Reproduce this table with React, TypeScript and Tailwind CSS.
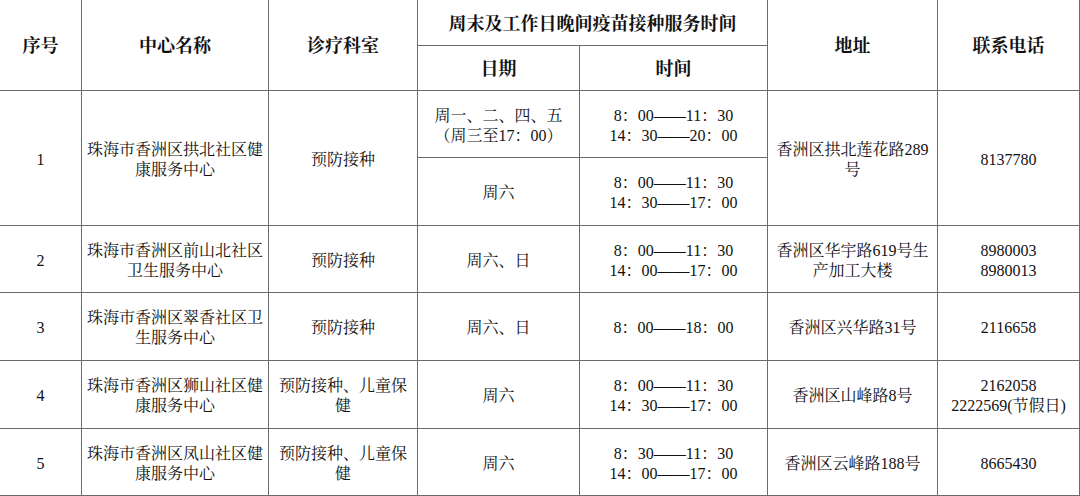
import React from "react";

const font = {
  fontFamily:
    '"Liberation Serif", "Noto Serif CJK SC", "Noto Sans CJK SC", serif',
};

const base = "border border-[#6b6b6b] px-[5px] text-center align-middle leading-[20px]";
const cell = `${base} pt-[3px]`;
const head = `${base} pt-[2px] text-[18px] font-bold`;

function Lines({ lines }: { lines: string[] }) {
  return (
    <>
      {lines.map((l, i) => (
        <div key={i}>{l}</div>
      ))}
    </>
  );
}

type Row = {
  no: string;
  name: string;
  dept: string;
  day: string[];
  time: string[];
  addr: string;
  phone: string[];
  h: string;
};

const rows: Row[] = [
  {
    no: "2",
    name: "珠海市香洲区前山北社区卫生服务中心",
    dept: "预防接种",
    day: ["周六、日"],
    time: ["8：00——11：30", "14：00——17：00"],
    addr: "香洲区华宇路619号生产加工大楼",
    phone: ["8980003", "8980013"],
    h: "h-[67px]",
  },
  {
    no: "3",
    name: "珠海市香洲区翠香社区卫生服务中心",
    dept: "预防接种",
    day: ["周六、日"],
    time: ["8：00——18：00"],
    addr: "香洲区兴华路31号",
    phone: ["2116658"],
    h: "h-[68px]",
  },
  {
    no: "4",
    name: "珠海市香洲区狮山社区健康服务中心",
    dept: "预防接种、儿童保健",
    day: ["周六"],
    time: ["8：00——11：30", "14：30——17：00"],
    addr: "香洲区山峰路8号",
    phone: ["2162058", "2222569(节假日)"],
    h: "h-[68px]",
  },
  {
    no: "5",
    name: "珠海市香洲区凤山社区健康服务中心",
    dept: "预防接种、儿童保健",
    day: ["周六"],
    time: ["8：30——11：30", "14：00——17：00"],
    addr: "香洲区云峰路188号",
    phone: ["8665430"],
    h: "h-[67px]",
  },
];

export default function App() {
  return (
    <div className="h-[496px] w-[1080px] overflow-hidden bg-white text-[16px] text-[#111]" style={font}>
      <table className="-ml-px -mt-px w-[1080px] table-fixed border-collapse">
        <colgroup>
          <col className="w-[82px]" />
          <col className="w-[187px]" />
          <col className="w-[149px]" />
          <col className="w-[162px]" />
          <col className="w-[188px]" />
          <col className="w-[170px]" />
          <col className="w-[142px]" />
        </colgroup>
        <tbody>
          <tr className="h-[46px]">
            <td rowSpan={2} className={head}>序号</td>
            <td rowSpan={2} className={head}>中心名称</td>
            <td rowSpan={2} className={head}>诊疗科室</td>
            <td colSpan={2} className={head}>周末及工作日晚间疫苗接种服务时间</td>
            <td rowSpan={2} className={head}>地址</td>
            <td rowSpan={2} className={head}>联系电话</td>
          </tr>
          <tr className="h-[45px]">
            <td className={head}>日期</td>
            <td className={head}>时间</td>
          </tr>
          <tr className="h-[67px]">
            <td rowSpan={2} className={cell}>1</td>
            <td rowSpan={2} className={cell}>珠海市香洲区拱北社区健康服务中心</td>
            <td rowSpan={2} className={cell}>预防接种</td>
            <td className={cell}>
              <Lines lines={["周一、二、四、五", "（周三至17：00）"]} />
            </td>
            <td className={cell}>
              <Lines lines={["8：00——11：30", "14：30——20：00"]} />
            </td>
            <td rowSpan={2} className={cell}>香洲区拱北莲花路289号</td>
            <td rowSpan={2} className={cell}>8137780</td>
          </tr>
          <tr className="h-[68px]">
            <td className={cell}>周六</td>
            <td className={cell}>
              <Lines lines={["8：00——11：30", "14：30——17：00"]} />
            </td>
          </tr>
          {rows.map((r) => (
            <tr key={r.no} className={r.h}>
              <td className={cell}>{r.no}</td>
              <td className={cell}>{r.name}</td>
              <td className={cell}>{r.dept}</td>
              <td className={cell}>
                <Lines lines={r.day} />
              </td>
              <td className={cell}>
                <Lines lines={r.time} />
              </td>
              <td className={cell}>{r.addr}</td>
              <td className={cell}>
                <Lines lines={r.phone} />
              </td>
            </tr>
          ))}
        </tbody>
      </table>
    </div>
  );
}
